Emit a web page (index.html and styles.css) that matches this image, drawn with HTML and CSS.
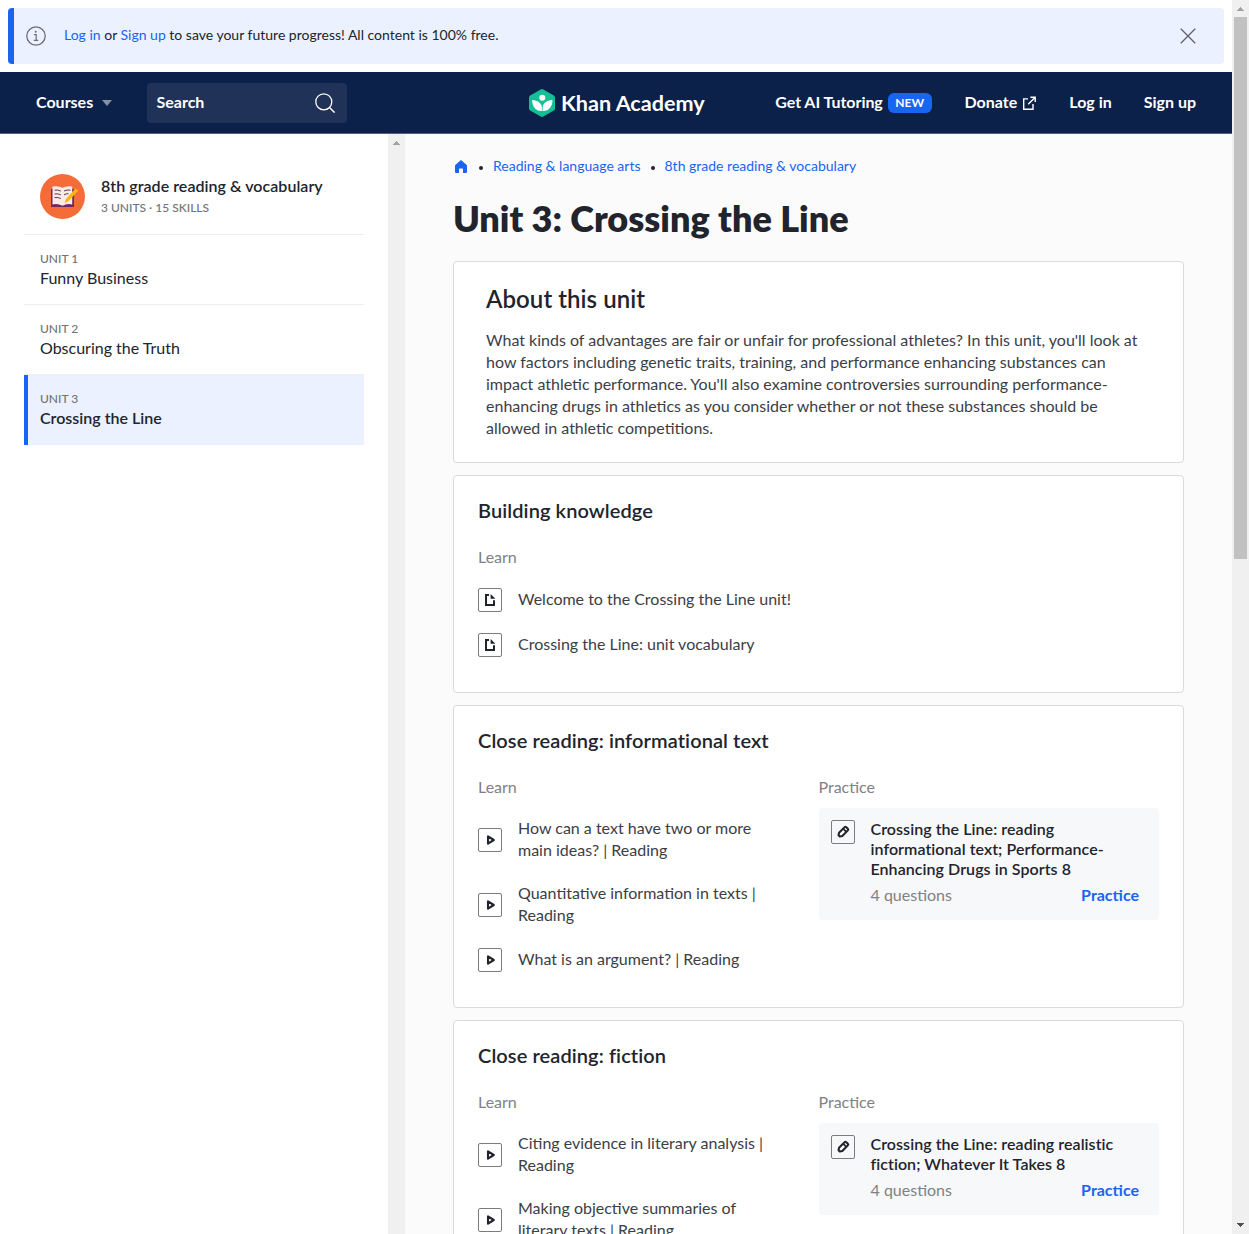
FILE: index.html
```html
<!DOCTYPE html>
<html lang="en">
<head>
<meta charset="utf-8">
<title>Unit 3: Crossing the Line | Khan Academy</title>
<link rel="stylesheet" href="styles.css">
</head>
<body>
<svg class="defs" width="0" height="0" aria-hidden="true">
  <symbol id="article" viewBox="1 1 22 22"><path d="M11 7H8V17H16V12.2" fill="none" stroke="#21242c" stroke-width="2"/><path d="M12.6 6V10.8H17.4Z" fill="#21242c"/></symbol>
  <symbol id="video" viewBox="1 1 22 22"><path d="M10 8.3V15.7L15.8 12Z" fill="none" stroke="#21242c" stroke-width="2.1" stroke-linejoin="round"/></symbol>
  <symbol id="pencil" viewBox="1 1 22 22"><g transform="rotate(45 12 12)" fill="none" stroke="#21242c" stroke-width="2.1"><path d="M9.7 7.4Q9.7 6.3 10.9 6.3H13.1Q14.3 6.3 14.3 7.4V15.3L12.9 17.4H11.1L9.7 15.3Z" stroke-linejoin="round"/><path d="M9.7 9.6H14.3" stroke-width="1.8"/></g></symbol>
</svg>
<div class="window">
  <div class="app">
    <div class="banner">
      <svg class="info" viewBox="0 0 20 20"><circle cx="10" cy="10" r="9.2" fill="none" stroke="#6b6e77" stroke-width="1.3"/><circle cx="9.7" cy="5.8" r="1" fill="#6b6e77"/><path d="M8 8.7H10.2V14.3M7.8 14.4H12.3" fill="none" stroke="#6b6e77" stroke-width="1.2"/></svg>
      <p class="banner-text"><a>Log in</a> or <a>Sign up</a> to save your future progress! All content is 100% free.</p>
      <svg class="close" viewBox="0 0 16 16"><path d="M.8.8 15.2 15.2M15.2.8.8 15.2" stroke="#5f626b" stroke-width="1.3"/></svg>
    </div>
    <header class="header">
      <div class="header-left">
        <span class="courses">Courses</span><span class="caret"></span>
        <div class="search"><span>Search</span><svg viewBox="0 0 20 20"><circle cx="8.8" cy="8.8" r="8" fill="none" stroke="#fff" stroke-width="1.3"/><path d="M14.5 14.5 19.6 19.6" stroke="#fff" stroke-width="1.4"/></svg></div>
      </div>
      <div class="logo">
        <svg viewBox="0 0 26 28"><path d="M11.7.4Q13-.3 14.3.4L24.8 6.4Q26 7.1 26 8.5V19.5Q26 20.9 24.8 21.6L14.3 27.6Q13 28.3 11.7 27.6L1.2 21.6Q0 20.9 0 19.5V8.5Q0 7.1 1.2 6.4Z" fill="#14bf96"/><circle cx="13.3" cy="8.7" r="3" fill="#fff"/><path d="M3.2 11C8.6 11.2 12.5 14.3 13.3 18.6C14.1 14.3 18 11.2 23.4 11C23.8 17.4 19.4 22 14.6 22H12C7.2 22 2.8 17.4 3.2 11Z" fill="#fff"/><path d="M13.3 15.8V22" stroke="#14bf96" stroke-width=".7"/></svg>
        <span>Khan Academy</span>
      </div>
      <nav class="nav">
        <a class="tutoring">Get AI Tutoring</a><span class="new">NEW</span>
        <a class="donate">Donate</a><svg class="external" viewBox="0 0 14 14"><path d="M6 2.9H1.7V13.2H11V8M8.4 1.2H13.2V6M13 1.4 6.2 8.2" fill="none" stroke="#fff" stroke-width="1.4"/></svg>
        <a class="login">Log in</a><a class="signup">Sign up</a>
      </nav>
    </header>
    <div class="body">
      <aside class="sidebar">
        <div class="course">
          <svg class="course-icon" viewBox="0 0 45 45"><circle cx="22.5" cy="22.5" r="22.5" fill="#f66c38"/><path d="M11 15H34V33H11Z" fill="#74265f"/><path d="M12.5 12.6Q18 11.6 22.5 13.8Q27 11.6 32.2 12.6V30.4Q26.5 29.3 22.5 31.8Q18 29.3 12.5 30.4Z" fill="#f5eee5"/><path d="M14.5 16.2Q18 15.5 20.8 17M14.5 20Q18 19.3 20.8 20.8M14.5 23.6Q18 23 20.8 24.5M24 17Q27 15.4 30.5 16.2M24 20.8Q26 19.6 28.5 19.6" fill="none" stroke="#74265f" stroke-width="1"/><path d="M24.5 29 26 25 35.6 14.3 38.2 16.7 28.3 27.2Z" fill="#fcb314"/></svg>
          <div><div class="course-name">8th grade reading &amp; vocabulary</div><div class="course-meta">3 UNITS · 15 SKILLS</div></div>
        </div>
        <div class="unit"><small>UNIT 1</small><span>Funny Business</span></div>
        <div class="unit"><small>UNIT 2</small><span>Obscuring the Truth</span></div>
        <div class="unit active"><small>UNIT 3</small><span>Crossing the Line</span></div>
      </aside>
      <div class="side-scroll"><svg viewBox="0 0 7 4"><path d="M3 0H4V1H5V2H6V3H7V4H0V3H1V2H2V1H3Z" fill="#a3a3a3"/></svg></div>
      <main class="main">
        <div class="crumbs">
          <svg viewBox="0 0 12 13"><path d="M0 5.2 6 0 12 5.2V12Q12 13 11 13H8V9.2Q8 8.6 7.4 8.6H4.6Q4 8.6 4 9.2V13H1Q0 13 0 12Z" fill="#1865f2"/></svg>
          <i></i><a>Reading &amp; language arts</a><i></i><a>8th grade reading &amp; vocabulary</a>
        </div>
        <h1>Unit 3: Crossing the Line</h1>
        <section class="card about">
          <h2>About this unit</h2>
          <p>What kinds of advantages are fair or unfair for professional athletes? In this unit, you'll look at how factors including genetic traits, training, and performance enhancing substances can impact athletic performance. You'll also examine controversies surrounding performance-enhancing drugs in athletics as you consider whether or not these substances should be allowed in athletic competitions.</p>
        </section>
        <section class="card">
          <h3>Building knowledge</h3>
          <div class="columns">
            <div class="column wide"><div class="label">Learn</div>
              <div class="item"><svg class="icon"><use href="#article"/></svg><span>Welcome to the Crossing the Line unit!</span></div>
              <div class="item"><svg class="icon"><use href="#article"/></svg><span>Crossing the Line: unit vocabulary</span></div>
            </div>
          </div>
        </section>
        <section class="card">
          <h3>Close reading: informational text</h3>
          <div class="columns">
            <div class="column"><div class="label">Learn</div>
              <div class="item"><svg class="icon"><use href="#video"/></svg><span>How can a text have two or more main ideas? | Reading</span></div>
              <div class="item"><svg class="icon"><use href="#video"/></svg><span>Quantitative information in texts | Reading</span></div>
              <div class="item"><svg class="icon"><use href="#video"/></svg><span>What is an argument? | Reading</span></div>
            </div>
            <div class="column"><div class="label">Practice</div>
              <div class="exercise"><svg class="icon"><use href="#pencil"/></svg><div class="exercise-body"><div class="exercise-name">Crossing the Line: reading informational text; Performance-Enhancing Drugs in Sports 8</div><div class="exercise-row"><span>4 questions</span><a>Practice</a></div></div></div>
            </div>
          </div>
        </section>
        <section class="card">
          <h3>Close reading: fiction</h3>
          <div class="columns">
            <div class="column"><div class="label">Learn</div>
              <div class="item"><svg class="icon"><use href="#video"/></svg><span>Citing evidence in literary analysis | Reading</span></div>
              <div class="item"><svg class="icon"><use href="#video"/></svg><span>Making objective summaries of literary texts | Reading</span></div>
            </div>
            <div class="column"><div class="label">Practice</div>
              <div class="exercise"><svg class="icon"><use href="#pencil"/></svg><div class="exercise-body"><div class="exercise-name">Crossing the Line: reading realistic fiction; Whatever It Takes 8</div><div class="exercise-row"><span>4 questions</span><a>Practice</a></div></div></div>
            </div>
          </div>
        </section>
      </main>
    </div>
  </div>
  <div class="page-scroll">
    <svg viewBox="0 0 7 4"><path d="M3 0H4V1H5V2H6V3H7V4H0V3H1V2H2V1H3Z" fill="#a3a3a3"/></svg>
    <div class="thumb"></div>
    <svg class="down" viewBox="0 0 7 4"><path d="M0 0H7V1H6V2H5V3H4V4H3V3H2V2H1V1H0Z" fill="#505050"/></svg>
  </div>
</div>
</body>
</html>
```
FILE: styles.css
```css
* { box-sizing: border-box; }
body { margin: 0; font-family: Lato, sans-serif; font-size: 16px; line-height: 22px; color: #21242c; }
p, h1, h2, h3 { margin: 0; }
svg { flex: none; display: block; }
.defs { position: absolute; }
.window { display: flex; height: 1234px; overflow: hidden; background: #fff; }
.app { flex: 1; display: flex; flex-direction: column; min-width: 0; }

.banner { flex: none; display: flex; align-items: center; height: 56px; margin: 8px; padding: 0 28px 0 12px; border-left: 6px solid #1865f2; border-radius: 4px; background: #ebf1fe; }
.info { width: 20px; height: 20px; }
.banner-text { flex: 1; margin-left: 18px; font-size: 14px; line-height: 20px; padding-bottom: 2px; }
.banner-text a { color: #1865f2; }
.close { width: 16px; height: 16px; }

.header { flex: none; display: flex; align-items: center; height: 62px; padding: 0 36px; border-bottom: 1px solid #51607f; background: #0b2149; color: #fff; font-weight: 700; }
.header-left { display: flex; align-items: center; width: 493px; }
.courses { width: 58px; padding-bottom: 2px; white-space: nowrap; }
.caret { margin: 1px 0 0 8px; border: 5.5px solid transparent; border-top: 6px solid #868fa3; border-bottom: 0; }
.search { display: flex; align-items: center; justify-content: space-between; width: 200px; height: 40px; margin-left: 34px; padding: 0 12px 2px 10px; border-radius: 4px; background: #203258; }
.search { margin-left: 34.5px; }
.search svg { width: 20px; height: 20px; margin-top: 2px; }
.logo { display: flex; align-items: center; gap: 6px; font-size: 21.6px; white-space: nowrap; }
.logo svg { width: 26px; height: 28px; }
.logo span { padding-top: 1px; }
.nav { flex: 1; display: flex; align-items: center; justify-content: flex-end; white-space: nowrap; }
.nav a { padding-bottom: 2px; }
.tutoring { letter-spacing: -.05px; }
.new { height: 20px; margin-left: 5px; padding: 0 7.5px; border-radius: 6px; background: #1865f2; font-size: 12px; line-height: 19px; }
.donate { margin-left: 33px; }
.external { width: 14px; height: 14px; margin-left: 5px; }
.login { margin-left: 33px; }
.signup { margin-left: 32px; }

.body { flex: 1; display: flex; min-height: 0; }
.sidebar { flex: none; width: 388px; padding: 24px; }
.course { display: flex; align-items: flex-start; gap: 16px; height: 77px; padding: 16px 16px 0; border-bottom: 1px solid #edeeee; }
.course-icon { width: 45px; height: 45px; }
.course-name { padding-top: 2px; font-weight: 600; line-height: 20px; letter-spacing: .04px; white-space: nowrap; }
.course-meta, .unit small { display: block; font-size: 12px; line-height: 16px; font-weight: 500; color: #717378; }
.course-meta { margin-top: 4px; }
.unit { height: 70px; padding: 16px 16px 0; border-bottom: 1px solid #edeeee; }
.unit span { display: block; margin-top: 1px; line-height: 20px; }
.unit.active { padding-left: 12px; border-left: 4px solid #1865f2; border-bottom: 0; background: #ebf1fe; font-weight: 600; }
.side-scroll { flex: none; width: 17px; padding: 7px 0 0 5px; background: #f0f0f0; }
.side-scroll svg { width: 7px; height: 4px; }

.main { flex: 1; min-width: 0; padding: 22px 48px 0; overflow: hidden; background: #fbfbfb; }
.crumbs { display: flex; align-items: center; height: 20px; font-size: 14px; color: #1865f2; padding-left: 2px; white-space: nowrap; }
.crumbs svg { width: 12px; height: 13px; }
.crumbs i { width: 4px; height: 4px; margin: 3px 10px 0 12px; border-radius: 2px; background: #21242c; }
.crumbs a + i { margin-left: 10px; }
h1 { height: 40px; margin: 22px 0 23px; font-size: 36px; line-height: 40px; font-weight: 800; }
.card { margin-bottom: 12px; padding: 22px 24px 24.5px; border: 1px solid #d9dadc; border-radius: 4px; background: #fff; }
.about { padding: 23px 32px; }
h2 { margin-bottom: 16px; font-size: 24px; line-height: 28px; font-weight: 600; letter-spacing: .06px; }
.about p { color: #3b3e46; }
h3 { font-size: 20px; line-height: 24px; font-weight: 600; letter-spacing: .09px; }
.columns { display: flex; margin-top: 24px; }
.column { flex: 1; min-width: 0; }
.label { height: 31.5px; color: #7f8186; }
.item { display: flex; align-items: center; gap: 16px; padding: 10.5px 32px 10.5px 0; color: #3b3e46; }
.item span { margin: -1px 0 1px; }
.icon { width: 24px; height: 24px; border: 1px solid #7a7c82; border-radius: 2px; }
.exercise { display: flex; gap: 16px; padding: 12px 20px 13px 12px; border-radius: 4px; background: #f7f8fa; }
.exercise-body { flex: 1; margin: -1px 0 1px; }
.exercise-name { line-height: 20px; font-weight: 600; letter-spacing: .06px; }
.exercise-row { display: flex; justify-content: space-between; margin-top: 5px; color: #7f8186; }
.exercise-row a { color: #1865f2; font-weight: 700; }

.page-scroll { flex: none; display: flex; flex-direction: column; align-items: center; width: 17px; padding: 7px 0; background: #f0f0f0; }
.page-scroll svg { width: 7px; height: 4px; }
.thumb { width: 13px; height: 542px; margin: 6px 0 auto; background: #c1c1c1; }
```
